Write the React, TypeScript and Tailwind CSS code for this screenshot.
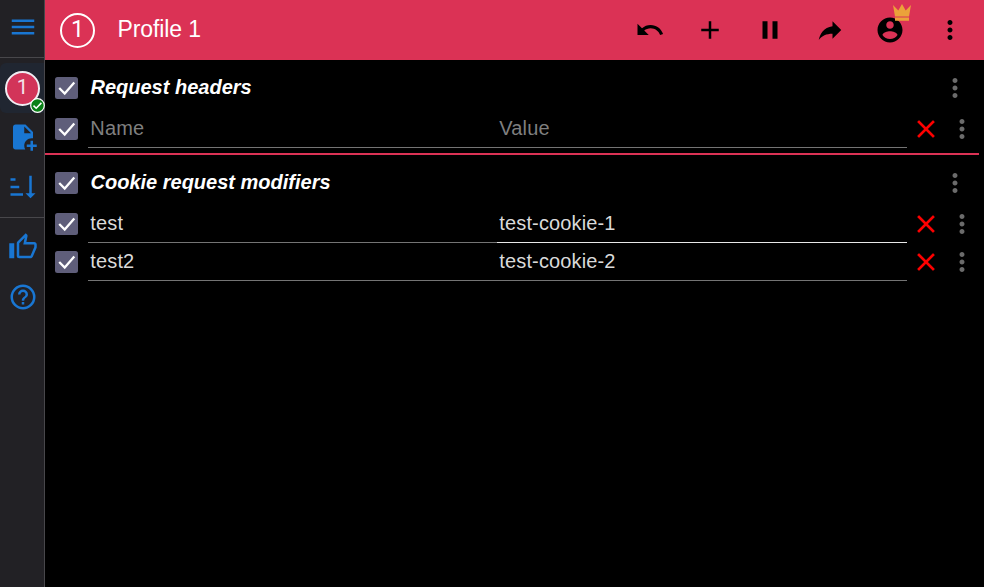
import React from 'react';

const icons = {
  menu: 'M3 18h18v-2H3v2zm0-5h18v-2H3v2zm0-7v2h18V6H3z',
  filePlus:
    'M14 2H6C4.89 2 4 2.89 4 4V20C4 21.11 4.89 22 6 22H13.81C13.28 21.09 13 20.05 13 19C13 15.69 15.69 13 19 13C19.34 13 19.67 13.03 20 13.08V8L14 2M13 9V3.5L18.5 9H13M23 20H20V23H18V20H15V18H18V15H20V18H23V20Z',
  sort: 'M19 17H22L18 21L14 17H17V3H19V17M2 17H12V19H2V17M6 5V7H2V5H6M2 11H9V13H2V11Z',
  thumb:
    'M5,9V21H1V9H5M9,21A2,2 0 0,1 7,19V9C7,8.45 7.22,7.95 7.59,7.59L14.17,1L15.23,2.06C15.5,2.33 15.67,2.7 15.67,3.11L15.64,3.43L14.69,8H21C22.11,8 23,8.9 23,10V12C23,12.26 22.95,12.5 22.86,12.73L19.84,19.78C19.54,20.5 18.83,21 18,21H9M9,19H18.03L21,12V10H12.21L13.34,4.68L9,9.03V19Z',
  help: 'M11,18H13V16H11V18M12,2A10,10 0 0,0 2,12A10,10 0 0,0 12,22A10,10 0 0,0 22,12A10,10 0 0,0 12,2M12,20C7.59,20 4,16.41 4,12C4,7.59 7.59,4 12,4C16.41,4 20,7.59 20,12C20,16.41 16.41,20 12,20M12,6A4,4 0 0,0 8,10H10A2,2 0 0,1 12,8A2,2 0 0,1 14,10C14,12 11,11.75 11,15H13C13,12.75 16,12.5 16,10A4,4 0 0,0 12,6Z',
  undo: 'M12.5 8c-2.65 0-5.05.99-6.9 2.6L2 7v9h9l-3.62-3.62c1.39-1.16 3.16-1.88 5.12-1.88 3.54 0 6.55 2.31 7.6 5.5l2.37-.78C21.08 11.03 17.15 8 12.5 8z',
  plus: 'M19 13h-6v6h-2v-6H5v-2h6V5h2v6h6v2z',
  pause: 'M6 19h4V5H6v14zm8-14v14h4V5h-4z',
  share: 'M21,12L14,5V9C7,10 4,15 3,20C5.5,16.5 9,14.9 14,14.9V19L21,12Z',
  account:
    'M12 2C6.48 2 2 6.48 2 12s4.48 10 10 10 10-4.48 10-10S17.52 2 12 2zm0 3c1.66 0 3 1.34 3 3s-1.34 3-3 3-3-1.34-3-3 1.34-3 3-3zm0 14.2c-2.5 0-4.71-1.28-6-3.22.03-1.99 4-3.08 6-3.08 1.99 0 5.97 1.09 6 3.08-1.29 1.94-3.5 3.22-6 3.22z',
  dots: 'M12 8c1.1 0 2-.9 2-2s-.9-2-2-2-2 .9-2 2 .9 2 2 2zm0 2c-1.1 0-2 .9-2 2s.9 2 2 2 2-.9 2-2-.9-2-2-2zm0 6c-1.1 0-2 .9-2 2s.9 2 2 2 2-.9 2-2-.9-2-2-2z',
  close: 'M19 6.41L17.59 5 12 10.59 6.41 5 5 6.41 10.59 12 5 17.59 6.41 19 12 13.41 17.59 19 19 17.59 13.41 12z',
};

function Icon({ name, className = '' }: { name: keyof typeof icons; className?: string }) {
  return (
    <svg viewBox="0 0 24 24" fill="currentColor" className={`size-[30px] shrink-0 ${className}`}>
      <path d={icons[name]} />
    </svg>
  );
}

function Checkbox() {
  return (
    <span className="flex h-[22px] w-[23px] shrink-0 rounded-[2.5px] bg-[#5f5e7a]">
      <svg viewBox="0 0 23 22" className="h-[22px] w-[23px]" fill="none" stroke="#fff" strokeWidth="2.3">
        <path d="M4.2 11l5.5 5.5 9.6-10.9" />
      </svg>
    </span>
  );
}

function SectionTitle({ children }: { children: string }) {
  return (
    <div className="flex h-10 items-center pr-[14px] pl-[10px]">
      <Checkbox />
      <h2 className="ml-[12.5px] flex-1 pb-[2px] text-[20px] leading-6 font-bold text-white italic">{children}</h2>
      <Icon name="dots" className="text-[#6b6b6b]" />
    </div>
  );
}

type RowProps = { name: string; value: string; placeholder?: boolean; active?: boolean };

function Row({ name, value, placeholder, active }: RowProps) {
  const tone = placeholder ? 'text-[#7f7f7f]' : 'text-[#dadada]';
  return (
    <div className="flex h-[38px] items-center pr-[7px] pl-[10px]">
      <Checkbox />
      <div className={`ml-[10px] flex h-[38px] w-[819px] text-[20px] leading-6 tracking-[0.14px] ${tone}`}>
        <div className="w-[409px] border-b border-[#747474] pt-[6px] pl-[2.3px]">{name}</div>
        <div className={`w-[410px] border-b pt-[6px] pl-[2.3px] ${active ? 'border-[#e8e8e8]' : 'border-[#747474]'}`}>
          {value}
        </div>
      </div>
      <Icon name="close" className="ml-1 stroke-[#ff0000] stroke-[0.15] text-[#ff0000]" />
      <Icon name="dots" className="ml-[6px] text-[#6b6b6b]" />
    </div>
  );
}

function Sidebar() {
  return (
    <aside className="flex w-[45px] shrink-0 flex-col border-r border-[#48474b] bg-[#222125] text-[#1976d2]">
      <div className="flex h-[58px] justify-center border-b border-[#48474b] pt-3 pl-[2px]">
        <Icon name="menu" />
      </div>
      <div className="relative mt-[5px] flex h-[50px] items-center rounded-l-md bg-[#202631] pl-[5px]">
        <div className="flex size-[35px] items-center justify-center rounded-full border-2 border-[#f1edf3] bg-[#d23459] pb-px font-['Roboto',sans-serif] text-[20.5px] leading-none text-[#f3e4eb]">
          1
        </div>
        <svg viewBox="0 0 15 15" className="absolute top-[35px] left-[30px] size-[15px]">
          <circle cx="7.5" cy="7.5" r="6.8" fill="#098016" stroke="#fff" strokeWidth="1.2" />
          <path d="M3.5 7.6l2.7 2.6 5.2-5.3" fill="none" stroke="#fff" strokeWidth="1.5" />
        </svg>
      </div>
      <div className="flex h-[105px] flex-col items-center gap-5 border-b border-[#48474b] pt-[9px] pl-[2px]">
        <Icon name="filePlus" />
        <Icon name="sort" />
      </div>
      <div className="flex flex-col items-center gap-5 pt-[14px] pl-[2px]">
        <Icon name="thumb" />
        <Icon name="help" />
      </div>
    </aside>
  );
}

function Header() {
  return (
    <header className="flex h-[60px] items-center bg-[#db3255] pr-[19px] pl-[15px] text-black">
      <div className="flex size-[35px] items-center justify-center rounded-full border-2 border-white font-['Roboto',sans-serif] text-[23.5px] leading-none text-white">
        1
      </div>
      <h1 className="ml-[22.5px] flex-1 pb-[2px] text-[23px] leading-7 tracking-[-0.1px] text-white">Profile 1</h1>
      <div className="flex gap-[30px]">
        <Icon name="undo" />
        <Icon name="plus" />
        <Icon name="pause" />
        <Icon name="share" />
        <div className="relative">
          <Icon name="account" />
          <svg viewBox="0 0 20 18" className="absolute -top-[11px] left-[17px] h-[18px] w-5" fill="#eba23a">
            <path d="M3 12.4L1 .9l5.3 5.7L10 0l3.7 6.6L19 .9l-2 11.5zM3 13.4h14v3.4H3z" />
          </svg>
        </div>
        <Icon name="dots" />
      </div>
    </header>
  );
}

export default function App() {
  return (
    <div className="flex h-[587px] w-[984px] overflow-hidden bg-black font-['Liberation_Sans',Arial,sans-serif]">
      <Sidebar />
      <main className="flex min-w-0 flex-1 flex-col">
        <Header />
        <section className="mr-[5px] border-b-2 border-[#db3255] pt-2 pb-[5px]">
          <div className="-mr-[5px] flex flex-col gap-[2px]">
            <SectionTitle>Request headers</SectionTitle>
            <Row name="Name" value="Value" placeholder />
          </div>
        </section>
        <section className="pt-2">
          <SectionTitle>Cookie request modifiers</SectionTitle>
          <div className="pt-[2px]">
            <Row name="test" value="test-cookie-1" active />
            <Row name="test2" value="test-cookie-2" />
          </div>
        </section>
      </main>
    </div>
  );
}
